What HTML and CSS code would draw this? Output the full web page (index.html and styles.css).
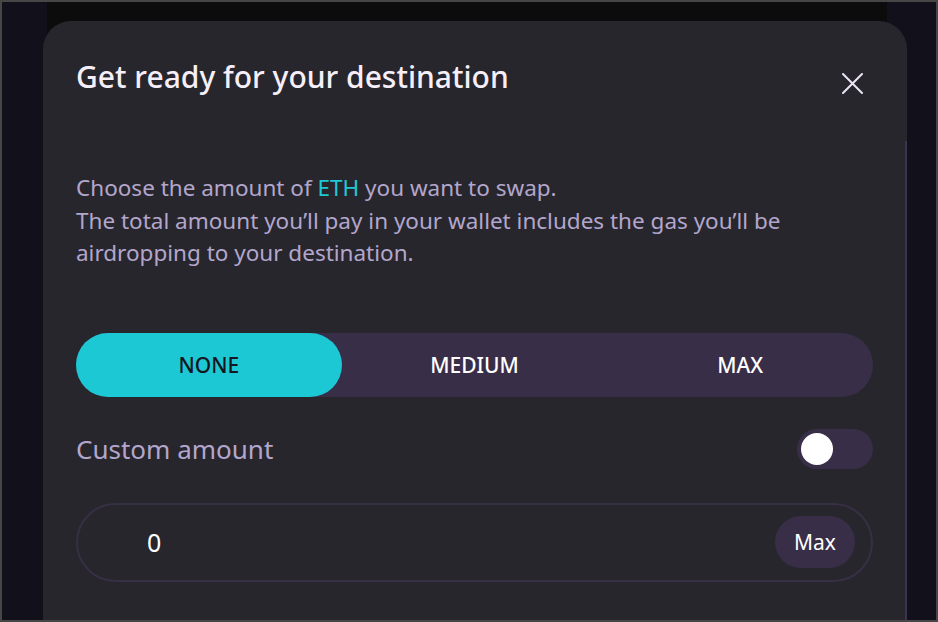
FILE: index.html
```html
<!DOCTYPE html>
<html lang="en">
<head>
<meta charset="utf-8">
<title>Get ready for your destination</title>
<link rel="stylesheet" href="styles.css">
</head>
<body>
<div class="screen">
  <div class="backdrop-panel"></div>
  <div class="modal">
    <div class="scrollbar"></div>
    <div class="modal-header">
      <h1 class="modal-title">Get ready for your destination</h1>
      <button class="close-btn" aria-label="Close">
        <svg width="21" height="21" viewBox="0 0 21 21"><path d="M1 1 L20 20 M20 1 L1 20" stroke="#ece4f4" stroke-width="2" fill="none" stroke-linecap="round"/></svg>
      </button>
    </div>
    <p class="description">Choose the amount of <span class="accent">ETH</span> you want to swap.<br>The total amount you’ll pay in your wallet includes the gas you’ll be airdropping to your destination.</p>
    <div class="segmented">
      <button class="seg seg-active">NONE</button>
      <button class="seg">MEDIUM</button>
      <button class="seg">MAX</button>
    </div>
    <div class="custom-row">
      <span class="custom-label">Custom amount</span>
      <span class="toggle"><span class="knob"></span></span>
    </div>
    <div class="amount-input">
      <span class="amount-value">0</span>
      <button class="max-btn">Max</button>
    </div>
  </div>
</div>
</body>
</html>
```

FILE: styles.css
```css
* { box-sizing: border-box; }
html, body { margin: 0; padding: 0; }
body {
  font-family: "Noto Sans", "Open Sans", sans-serif;
  background: #464646;
}
.screen {
  position: relative;
  width: 938px;
  height: 622px;
  border: 2px solid #464646;
  background: #11101b;
  overflow: hidden;
  padding: 19px 0 0 41px;
}
.backdrop-panel {
  position: absolute;
  left: 45px;
  top: 0;
  width: 840px;
  height: 60px;
  background: #0c0c0c;
}
.modal {
  position: relative;
  width: 864px;
  height: 620px;
  background: #27262d;
  border-radius: 28px 28px 0 0;
  padding: 37px 34px 0 33px;
}
.scrollbar {
  position: absolute;
  right: 0;
  top: 120px;
  width: 2px;
  height: 500px;
  background: #3b3350;
}
.modal-header {
  display: flex;
  align-items: flex-start;
  justify-content: space-between;
}
.modal-title {
  margin: 0;
  font-size: 30px;
  line-height: 38px;
  font-weight: 500;
  color: #f6eff9;
}
.close-btn {
  background: none;
  border: 0;
  padding: 0;
  margin: 15px 10px 0 0;
  width: 21px;
  height: 21px;
  display: block;
}
.close-btn svg { display: block; }
.description {
  margin: 76px 0 0;
  font-size: 22.5px;
  line-height: 32.5px;
  color: #b3a6cc;
}
.accent { color: #1ec8d4; }
.segmented {
  margin-top: 63px;
  display: grid;
  grid-template-columns: 1fr 1fr 1fr;
  height: 64px;
  background: #392e47;
  border-radius: 32px;
}
.seg {
  border: 0;
  background: transparent;
  font-family: inherit;
  font-size: 21px;
  font-weight: 500;
  color: #ffffff;
  border-radius: 32px;
  padding: 0;
}
.seg-active {
  background: #1cc8d4;
  color: #16161f;
}
.custom-row {
  margin-top: 32px;
  display: flex;
  align-items: center;
  justify-content: space-between;
  height: 40px;
}
.custom-label {
  font-size: 26px;
  line-height: 40px;
  color: #b3a6cc;
}
.toggle {
  width: 76px;
  height: 40px;
  border-radius: 20px;
  background: #392e47;
  display: flex;
  align-items: center;
  padding-left: 4px;
}
.knob {
  width: 32px;
  height: 32px;
  border-radius: 50%;
  background: #ffffff;
}
.amount-input {
  margin-top: 34px;
  height: 79px;
  border: 2px solid #372f43;
  border-radius: 40px;
  display: flex;
  align-items: center;
  justify-content: space-between;
  padding: 0 16px 0 69px;
}
.amount-value {
  font-size: 25px;
  color: #ffffff;
}
.max-btn {
  width: 80px;
  height: 52px;
  border: 0;
  border-radius: 26px;
  background: #392e47;
  color: #ffffff;
  font-family: inherit;
  font-size: 21px;
  padding: 0;
}
```
